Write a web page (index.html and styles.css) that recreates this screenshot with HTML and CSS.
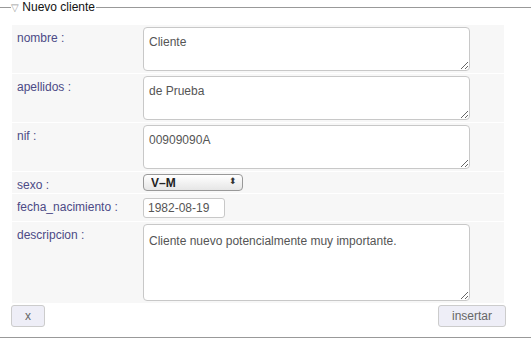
FILE: index.html
```html
<!DOCTYPE html>
<html lang="es">
<head>
  <meta charset="UTF-8">
  <title>Nuevo cliente</title>
  <link rel="stylesheet" href="styles.css">
</head>
<body>
  <fieldset class="box">
    <legend><span class="tri">&#9661;</span> Nuevo cliente</legend>
    <table class="form">
      <tr class="tall">
        <td class="lbl">nombre :</td>
        <td><textarea>Cliente</textarea></td>
      </tr>
      <tr class="tall">
        <td class="lbl">apellidos :</td>
        <td><textarea>de Prueba</textarea></td>
      </tr>
      <tr class="tall">
        <td class="lbl">nif :</td>
        <td><textarea>00909090A</textarea></td>
      </tr>
      <tr>
        <td class="lbl">sexo :</td>
        <td><span class="sel"><select><option>V&ndash;M</option></select></span></td>
      </tr>
      <tr>
        <td class="lbl">fecha_nacimiento :</td>
        <td><input type="text" class="date" value="1982-08-19"></td>
      </tr>
      <tr>
        <td class="lbl">descripcion :</td>
        <td><textarea class="big">Cliente nuevo potencialmente muy importante.</textarea></td>
      </tr>
    </table>
    <div class="actions">
      <button class="btn">x</button>
      <button class="btn">insertar</button>
    </div>
  </fieldset>
</body>
</html>
```

FILE: styles.css
```css
body { margin: 0; padding: 0; font-family: "Liberation Sans", Arial, sans-serif; font-size: 12px; background: #fff; }
.box { margin: 0; padding: 0 26px 10px 11px; border: none; border-top: 1px solid #999; border-bottom: 1px solid #999; min-width: 0; }
.box legend { margin: 0; padding: 0 1px 0 0; font-size: 12px; color: #111; }
.tri { color: #999; font-size: 10px; }
.form { width: 492px; border-collapse: collapse; margin: 11px 0 0 1px; }
.form td { background: #f7f7f7; padding: 2px 0; vertical-align: top; border-bottom: 1px solid #fff; }
.form td.lbl { width: 126px; padding: 6px 0 0 5px; color: #4c4a86; }
.form textarea { display: block; box-sizing: border-box; width: 327px; height: 44px; margin: 0; padding: 7px 5px; border: 1px solid #c8c8c8; border-radius: 4px; font-family: "Liberation Sans", Arial, sans-serif; font-size: 12px; color: #555; resize: both; }
.form tr.tall td { height: 44px; }
.form tr.tall td.lbl { height: 40px; }
.form textarea.big { height: 77px; padding-top: 9px; }
.sel { position: relative; display: block; }
.sel select { display: block; appearance: none; -webkit-appearance: none; width: 100px; height: 17px; padding: 0 0 0 7px; border: 1px solid #999; border-radius: 4px; background: linear-gradient(#fff, #e6e6e6); font-family: "Liberation Sans", Arial, sans-serif; font-size: 12px; font-weight: bold; color: #222; }
.sel::after { content: "\2B0D"; position: absolute; left: 86px; top: 2px; font-size: 9px; color: #333; pointer-events: none; }
.form input.date { display: block; box-sizing: border-box; width: 82px; height: 20px; margin: 2px 0 1px 0; padding: 0 4px; border: 1px solid #c8c8c8; border-radius: 3px; font-family: "Liberation Sans", Arial, sans-serif; font-size: 12px; color: #555; }
.actions { display: flex; justify-content: space-between; margin-top: 1px; margin-right: -1px; }
.btn { height: 22px; padding: 0 13px; border: 1px solid #ccc; border-radius: 3px; background: #eeeef7; font-family: "Liberation Sans", Arial, sans-serif; font-size: 12px; color: #666; }
```
